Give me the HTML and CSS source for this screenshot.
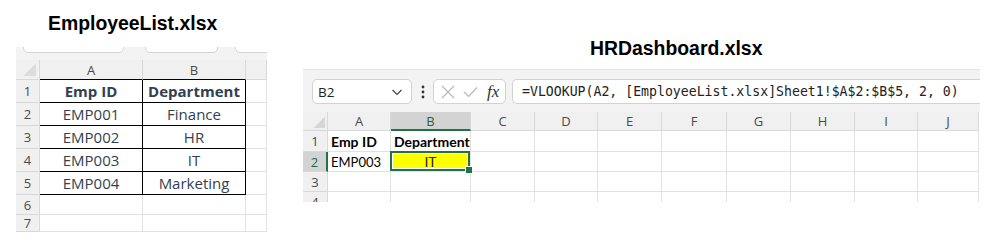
FILE: index.html
```html
<!DOCTYPE html>
<html>
<head>
<meta charset="utf-8">
<link rel="stylesheet" href="styles.css">
</head>
<body>
<div class="page">
  <section class="book book-left">
    <h1 class="title">EmployeeList.xlsx</h1>
    <div class="stub-bar">
      <span class="stub stub-name"></span>
      <span class="stub stub-mid"><svg class="tick" width="6" height="4" viewBox="0 0 6 4"><path d="M1 1 L3 3 L5 1" fill="none" stroke="#555" stroke-width="1"/></svg></span>
      <span class="stub stub-rest"></span>
    </div>
    <div class="grid grid-left">
      <div class="h corner"></div><div class="h colh">A</div><div class="h colh">B</div><div class="h colh"></div>

      <div class="h rowh">1</div><div class="c t tt b">Emp ID</div><div class="c t tt b">Department</div><div class="c"></div>
      <div class="h rowh">2</div><div class="c t">EMP001</div><div class="c t">Finance</div><div class="c"></div>
      <div class="h rowh">3</div><div class="c t">EMP002</div><div class="c t">HR</div><div class="c"></div>
      <div class="h rowh">4</div><div class="c t">EMP003</div><div class="c t">IT</div><div class="c"></div>
      <div class="h rowh">5</div><div class="c t">EMP004</div><div class="c t">Marketing</div><div class="c"></div>
      <div class="h rowh">6</div><div class="c"></div><div class="c"></div><div class="c"></div>
      <div class="h rowh">7</div><div class="c"></div><div class="c"></div><div class="c"></div>
    </div>
  </section>

  <section class="book book-right">
    <h1 class="title">HRDashboard.xlsx</h1>
    <div class="toolbar">
      <div class="box namebox">
        <span class="ref">B2</span>
        <svg class="chev" width="12" height="8" viewBox="0 0 12 8"><path d="M1.5 2 L6 6.5 L10.5 2" fill="none" stroke="#444" stroke-width="1.2"/></svg>
      </div>
      <div class="dots">
        <svg width="4" height="14" viewBox="0 0 4 14"><circle cx="2" cy="2" r="1.4" fill="#333"/><circle cx="2" cy="7" r="1.4" fill="#333"/><circle cx="2" cy="12" r="1.4" fill="#333"/></svg>
      </div>
      <div class="box fxbox">
        <svg class="ico" width="14" height="14" viewBox="0 0 14 14"><path d="M1 1 L13 13 M13 1 L1 13" stroke="#b8b8b8" stroke-width="1.2" fill="none"/></svg>
        <svg class="ico" width="15" height="12" viewBox="0 0 15 12"><path d="M1 6 L5.5 10.5 L14 1.5" stroke="#b8b8b8" stroke-width="1.2" fill="none"/></svg>
        <span class="fx">fx</span>
      </div>
      <div class="box formula">=VLOOKUP(A2, [EmployeeList.xlsx]Sheet1!$A$2:$B$5, 2, 0)</div>
    </div>
    <div class="grid grid-right">
      <div class="h corner"></div><div class="h colh">A</div><div class="h colh selcol">B</div><div class="h colh">C</div><div class="h colh">D</div><div class="h colh">E</div><div class="h colh">F</div><div class="h colh">G</div><div class="h colh">H</div><div class="h colh">I</div><div class="h colh">J</div>

      <div class="h rowh">1</div><div class="c b">Emp ID</div><div class="c b">Department</div><div class="c"></div><div class="c"></div><div class="c"></div><div class="c"></div><div class="c"></div><div class="c"></div><div class="c"></div><div class="c"></div>
      <div class="h rowh selrow">2</div><div class="c">EMP003</div><div class="c active">IT</div><div class="c"></div><div class="c"></div><div class="c"></div><div class="c"></div><div class="c"></div><div class="c"></div><div class="c"></div><div class="c"></div>
      <div class="h rowh">3</div><div class="c"></div><div class="c"></div><div class="c"></div><div class="c"></div><div class="c"></div><div class="c"></div><div class="c"></div><div class="c"></div><div class="c"></div><div class="c"></div>
      <div class="h rowh">4</div><div class="c"></div><div class="c"></div><div class="c"></div><div class="c"></div><div class="c"></div><div class="c"></div><div class="c"></div><div class="c"></div><div class="c"></div><div class="c"></div>
    </div>
  </section>
</div>
</body>
</html>
```

FILE: styles.css
```css
* { box-sizing: border-box; }

body {
  margin: 0;
  background: #ffffff;
  font-family: "Open Sans", sans-serif;
}

.page {
  display: flex;
  align-items: flex-start;
}

.book-left {
  margin-left: 16px;
  width: 251px;
}

.book-right {
  margin-left: 36px;
  width: 677px;
}

.title {
  margin: 0;
  font: bold 19.4px/22px "Liberation Sans", Arial, sans-serif;
  color: #000;
  white-space: nowrap;
}

.book-left .title {
  padding: 12px 0 13px 32px;
}

.book-right .title {
  padding: 37px 0 10px 287px;
}

/* left ribbon remnant */
.stub-bar {
  height: 13px;
  background: #f3f3f3;
  display: flex;
  align-items: flex-start;
  overflow: hidden;
  padding-left: 7px;
}

.stub {
  display: flex;
  justify-content: flex-end;
  align-items: flex-end;
  margin-top: -20px;
  height: 26px;
  background: #fff;
  border: 1px solid #d4d4d4;
  border-radius: 5px;
  flex: none;
}

.stub-name { width: 101px; }
.stub-mid { width: 73px; margin-left: 21px; padding: 0 15px 4px 0; }
.stub-rest { width: 60px; margin-left: 17px; }

.tick { display: block; }

/* grids */
.grid {
  display: grid;
  overflow: hidden;
}

.grid-left {
  grid-template-columns: 24px 103px 103px 21px;
  grid-template-rows: 20px repeat(5, 23px) 20px 17px;
  font-size: 15px;
  color: #333f4f;
}

.grid-right {
  grid-template-columns: 25px 63px 80px 64px 63px 64px 65px 64px 64px 63px 61px;
  grid-template-rows: 19px 21px 20px 20px 20px;
  height: 90px;
  font-family: "Lato", sans-serif;
  font-size: 13px;
  color: #000;
}

.grid-right .b { font-size: 14px; }

.h {
  background: #f0f0f0;
  color: #4a4a4a;
  font-family: "Open Sans", sans-serif;
  font-size: 13px;
  font-weight: normal;
  display: flex;
  align-items: center;
  justify-content: center;
  border-right: 1px solid #d9d9d9;
  border-bottom: 1px solid #d9d9d9;
}

.corner {
  background:
    linear-gradient(135deg, transparent 55%, #d7d7d7 55%) no-repeat right 2px bottom 2px / 13px 13px,
    #f0f0f0;
}

.grid-left .corner {
  background:
    linear-gradient(135deg, transparent 55%, #dcdcdc 55%) no-repeat right 3px bottom 3px / 14px 14px,
    #f0f0f0;
}

.c {
  border-right: 1px solid #e1e1e1;
  border-bottom: 1px solid #e1e1e1;
  display: flex;
  align-items: center;
  white-space: nowrap;
}

.grid-left .c { justify-content: center; }
.grid-right .c { padding-left: 3px; }

.b { font-weight: bold; }

.grid-left .t {
  border-right-color: #000;
  border-bottom-color: #000;
}

.grid-left .colh:nth-child(2),
.grid-left .colh:nth-child(3) {
  border-bottom-color: #000;
}

.selcol {
  background: #d3d3d3;
  color: #1e6b41;
  border-bottom: 2px solid #217346;
}

.selrow {
  background: #d3d3d3;
  color: #1e6b41;
  border-right: 2px solid #217346;
}

.active {
  position: relative;
  background: #ffff00;
  justify-content: center;
  color: #222;
  font-size: 14px;
}

.grid-right .active { padding-left: 0; }

.active::after {
  content: "";
  position: absolute;
  left: -1px;
  top: -1px;
  right: 0;
  bottom: 0;
  border: 2px solid #217346;
  box-shadow: inset 0 0 0 1px #ffffff;
}

.active::before {
  content: "";
  position: absolute;
  right: -3px;
  bottom: -3px;
  width: 6px;
  height: 6px;
  background: #217346;
  border: 1px solid #ffffff;
  z-index: 2;
}

/* formula bar */
.toolbar {
  height: 43px;
  background: #f3f3f3;
  border-top: 1px solid #e4e4e4;
  display: flex;
  align-items: flex-start;
  padding: 9px 0 0 9px;
}

.box {
  height: 25px;
  background: #fff;
  border: 1px solid #d2d2d2;
  border-radius: 5px;
  display: flex;
  align-items: center;
  flex: none;
}

.namebox {
  width: 100px;
  justify-content: space-between;
  padding: 0 8px 0 5px;
  font-size: 13.5px;
  color: #222;
}

.chev { display: block; }

.dots {
  width: 21px;
  height: 25px;
  display: flex;
  align-items: center;
  justify-content: center;
}

.dots svg { display: block; }

.fxbox {
  width: 73px;
  padding: 0 0 0 7px;
  gap: 8px;
}

.ico { display: block; }

.fx {
  font: italic 17px "Liberation Serif", "DejaVu Serif", serif;
  color: #333;
  margin-left: 1px;
}

.formula {
  flex: 1;
  margin-left: 6px;
  border-right: none;
  border-radius: 5px 0 0 5px;
  padding-left: 9px;
  font: 13.2px "DejaVu Sans Mono", monospace;
  color: #222;
  white-space: nowrap;
  overflow: hidden;
}
```
